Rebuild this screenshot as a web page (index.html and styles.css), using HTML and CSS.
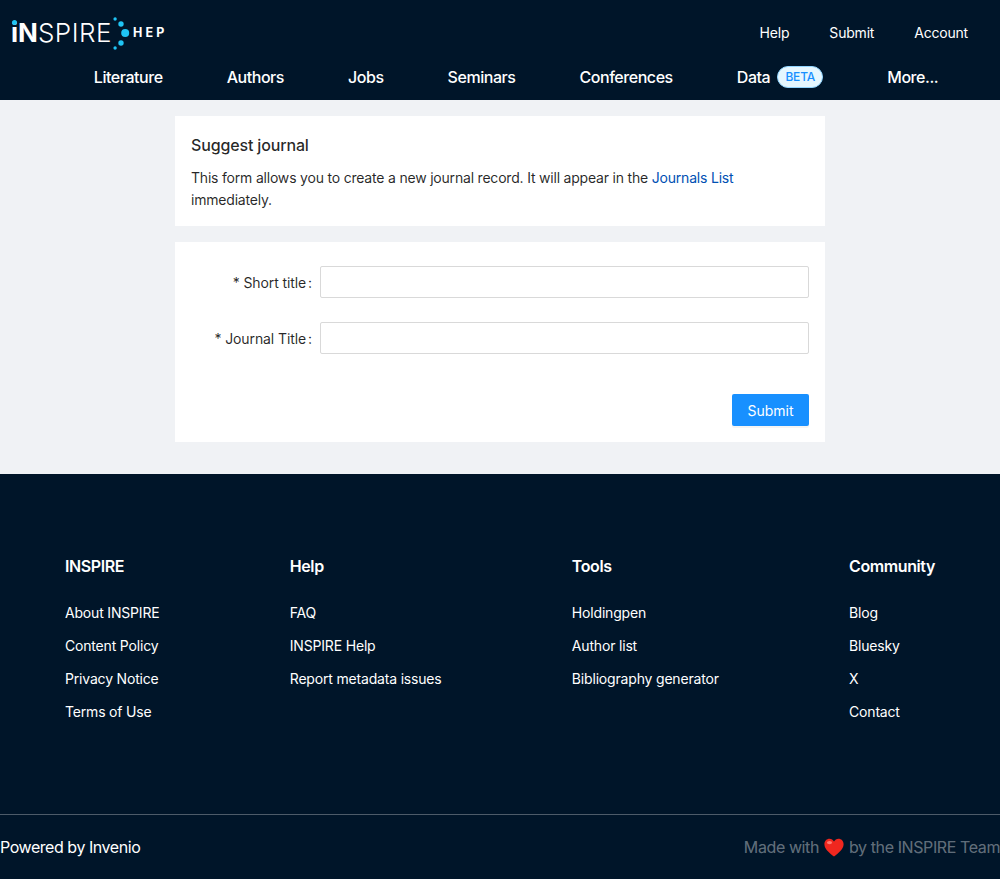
FILE: index.html
```html
<!DOCTYPE html>
<html lang="en">
<head>
    <meta charset="UTF-8">
    <meta name="viewport" content="width=device-width, initial-scale=1.0">
    <title>Suggest journal - INSPIRE</title>
    <link rel="stylesheet" href="styles.css">
</head>
<body>
    <header class="site-header">
        <div class="header-top">
            <a href="#" class="logo">
                <span class="logo-word"><span class="logo-in"><span class="logo-i">i</span>N</span><span class="logo-spire">SPIRE</span></span>
                <svg class="logo-dots" width="17" height="34" viewBox="0 0 17 34">
                    <circle cx="2.1" cy="3" r="1.7" fill="#1fc4f4"/>
                    <circle cx="8" cy="8" r="2.7" fill="#1fc4f4"/>
                    <circle cx="12.2" cy="17" r="4" fill="#1fc4f4"/>
                    <circle cx="8" cy="27" r="2.7" fill="#1fc4f4"/>
                    <circle cx="2.1" cy="32" r="1.7" fill="#1fc4f4"/>
                </svg>
                <span class="logo-hep">HEP</span>
            </a>
            <nav class="top-links">
                <a href="#">Help</a>
                <a href="#">Submit</a>
                <a href="#">Account</a>
            </nav>
        </div>
        <nav class="main-nav">
            <a href="#">Literature</a>
            <a href="#">Authors</a>
            <a href="#">Jobs</a>
            <a href="#">Seminars</a>
            <a href="#">Conferences</a>
            <a href="#" class="nav-data">Data <span class="beta">BETA</span></a>
            <a href="#">More...</a>
        </nav>
    </header>

    <main class="page">
        <section class="card intro">
            <h2>Suggest journal</h2>
            <p>This form allows you to create a new journal record. It will appear in the <a href="#">Journals List</a> immediately.</p>
        </section>

        <form class="card journal-form">
            <div class="form-row">
                <label for="short-title">* Short title<span class="colon">:</span></label>
                <input id="short-title" type="text">
            </div>
            <div class="form-row">
                <label for="journal-title">* Journal Title<span class="colon">:</span></label>
                <input id="journal-title" type="text">
            </div>
            <div class="form-actions">
                <button type="button" class="submit">Submit</button>
            </div>
        </form>
    </main>

    <footer class="site-footer">
        <div class="footer-columns">
            <div class="footer-col">
                <h3>INSPIRE</h3>
                <a href="#">About INSPIRE</a>
                <a href="#">Content Policy</a>
                <a href="#">Privacy Notice</a>
                <a href="#">Terms of Use</a>
            </div>
            <div class="footer-col">
                <h3>Help</h3>
                <a href="#">FAQ</a>
                <a href="#">INSPIRE Help</a>
                <a href="#">Report metadata issues</a>
            </div>
            <div class="footer-col">
                <h3>Tools</h3>
                <a href="#">Holdingpen</a>
                <a href="#">Author list</a>
                <a href="#">Bibliography generator</a>
            </div>
            <div class="footer-col">
                <h3>Community</h3>
                <a href="#">Blog</a>
                <a href="#">Bluesky</a>
                <a href="#">X</a>
                <a href="#">Contact</a>
            </div>
        </div>
        <div class="footer-bottom">
            <span class="powered">Powered by Invenio</span>
            <span class="made-with">Made with
                <svg class="heart" width="20" height="19" viewBox="0 0 20 19">
                    <path d="M10 18.6C6.5 15.6 0.4 11.6 0.4 6.2 0.4 2.9 2.8 0.7 5.5 0.7 7.5 0.7 9.1 1.8 10 3.6 10.9 1.8 12.5 0.7 14.5 0.7 17.2 0.7 19.6 2.9 19.6 6.2 19.6 11.6 13.5 15.6 10 18.6Z" fill="#f0271f"/>
                    <ellipse cx="5.5" cy="4.6" rx="2.6" ry="1.7" fill="#ff7a70"/>
                </svg>
                by the INSPIRE Team</span>
        </div>
    </footer>
</body>
</html>
```

FILE: styles.css
```css
* {
    box-sizing: border-box;
}
body {
    margin: 0;
    font-family: Inter, "Liberation Sans", sans-serif;
    font-size: 14px;
    line-height: 22px;
    color: rgba(0,0,0,0.85);
    background-color: #f0f2f5;
}
a {
    text-decoration: none;
    color: inherit;
}

/* header */
.site-header {
    height: 100px;
    background-color: #001529;
    color: white;
}
.header-top {
    display: flex;
    justify-content: space-between;
    align-items: center;
    height: 66px;
    padding: 0 32px 0 11px;
}
.logo {
    display: flex;
    align-items: center;
}
.logo-word {
    font-size: 26px;
    line-height: 30px;
}
.logo-in {
    font-weight: 700;
}
.logo-i {
    position: relative;
}
/* cyan dot sitting over the dot of the i */
.logo-i::after {
    content: "";
    position: absolute;
    left: 1px;
    top: 3px;
    width: 5px;
    height: 5px;
    border-radius: 50%;
    background-color: #1fc4f4;
}
.logo-spire {
    font-weight: 300;
    letter-spacing: 0.5px;
}
.logo-dots {
    margin-left: 1px;
}
.logo-hep {
    margin-left: 3px;
    font-size: 12.5px;
    font-weight: 700;
    letter-spacing: 3.2px;
}
.top-links {
    display: flex;
    gap: 40px;
    letter-spacing: -0.2px;
}
.main-nav {
    display: flex;
    justify-content: center;
    align-items: center;
    gap: 64px;
    height: 22px;
    padding-left: 32px;
    font-size: 16px;
    font-weight: 500;
    letter-spacing: -0.45px;
}
.nav-data {
    display: flex;
    align-items: center;
    gap: 7px;
}
.beta {
    width: 46px;
    height: 22px;
    border: 1px solid #91d5ff;
    border-radius: 11px;
    background-color: #e6f7ff;
    color: #1890ff;
    font-size: 12px;
    font-weight: 500;
    line-height: 20px;
    letter-spacing: -0.2px;
    text-align: center;
}

/* main content */
.page {
    width: 650px;
    margin: 0 auto;
    padding: 16px 0 32px;
}
.card {
    background-color: white;
    padding: 16px;
}
.intro {
    height: 110px;
    margin-bottom: 16px;
}
.intro h2 {
    margin: 0 0 9px;
    font-size: 16px;
    font-weight: 500;
    line-height: 26px;
    letter-spacing: -0.15px;
}
.intro p {
    margin: 0;
    letter-spacing: -0.2px;
}
.intro p a {
    color: #0050b3;
}
.journal-form {
    height: 200px;
    padding-top: 24px;
}
.form-row {
    display: flex;
    align-items: center;
    margin-bottom: 24px;
}
.form-row label {
    width: 129px;
    padding-top: 2px;
    letter-spacing: -0.1px;
    text-align: right;
}
.colon {
    margin: 0 8px 0 2px;
}
.form-row input {
    flex: 1;
    height: 32px;
    border: 1px solid #d9d9d9;
    border-radius: 2px;
    background-color: white;
}
.form-actions {
    display: flex;
    justify-content: flex-end;
    margin-top: 40px;
}
.submit {
    width: 77px;
    height: 32px;
    border: 0;
    border-radius: 2px;
    background-color: #1890ff;
    box-shadow: 0 2px 0 rgba(0,0,0,0.045);
    color: white;
    font-family: inherit;
    font-size: 14px;
}

/* footer */
.site-footer {
    height: 405px;
    background-color: #001529;
    color: white;
}
.footer-columns {
    display: flex;
    justify-content: space-between;
    height: 340px;
    padding: 80px 65px 0;
}
.footer-col h3 {
    margin: 0 0 24px;
    font-size: 16px;
    font-weight: 600;
    line-height: 24px;
    letter-spacing: -0.4px;
}
.footer-col a {
    display: block;
    margin-bottom: 11px;
    letter-spacing: -0.18px;
}
.footer-bottom {
    display: flex;
    justify-content: space-between;
    align-items: center;
    height: 65px;
    border-top: 1px solid rgba(255,255,255,0.3);
    font-size: 16px;
    letter-spacing: -0.45px;
}
.made-with {
    display: flex;
    align-items: center;
    gap: 5px;
    color: rgba(255,255,255,0.4);
    letter-spacing: -0.4px;
}
```
